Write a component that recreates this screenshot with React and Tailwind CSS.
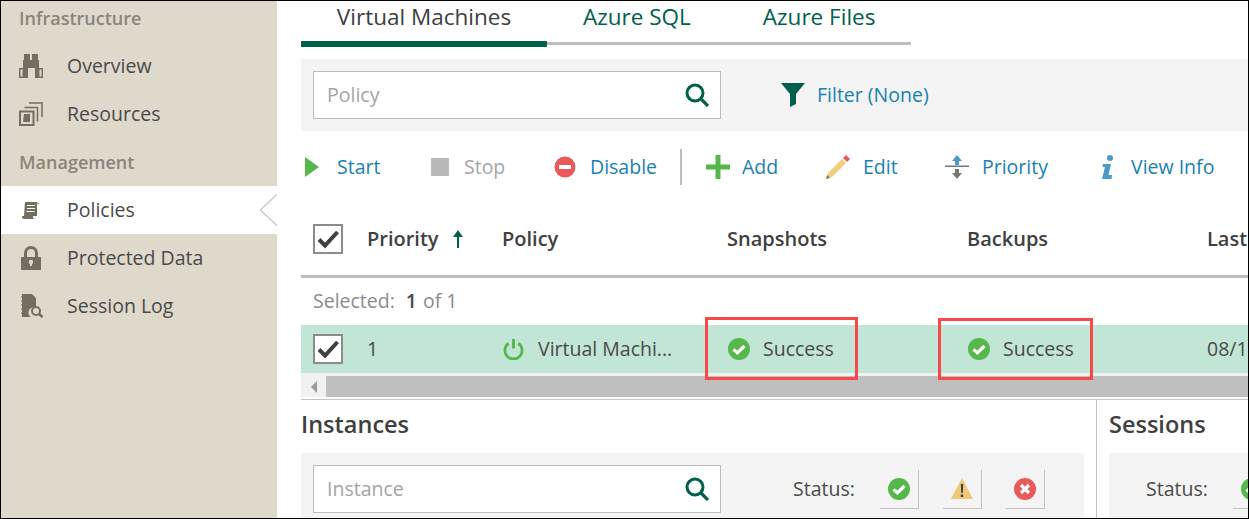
const font = { fontFamily: '"Open Sans", sans-serif' };

const CheckCircle = ({ className = "w-[22px] h-[22px]" }) => (
  <svg viewBox="0 0 22 22" className={className}>
    <circle cx="11" cy="11" r="11" fill="#56b84b" />
    <path d="M5.500 11.300l3.800 3.600L16.500 8" fill="none" stroke="#fff" strokeWidth="3.200" />
  </svg>
);

const SearchGlass = () => (
  <svg viewBox="0 0 24 24" className="w-6 h-6 shrink-0" fill="none" stroke="#00604b">
    <circle cx="10" cy="10" r="8" strokeWidth="3" />
    <path d="M15.500 15.500l7.500 7.500" strokeWidth="3.200" />
  </svg>
);

const Binoculars = () => (
  <svg viewBox="0 0 24 24" className="w-6 h-6" fill="#746e62">
    <path d="M5 0h6v6h2V0h6v6h1v8h4v10h-8V14H9v10H0V14h4V6h1z" />
    <path d="M1.500 15.500h2v7h-2zM20.500 15.500h2v7h-2z" fill="#dfd9cc" />
  </svg>
);

const Stack = () => (
  <svg viewBox="0 0 24 24" className="w-6 h-6" fill="none" stroke="#746e62" strokeWidth="1.500">
    <path d="M10 1h13v14M5.500 5.500h13v14" />
    <rect x="1" y="9.500" width="13.500" height="13.500" strokeWidth="2" />
    <path d="M5 12h6v8H4z" fill="#746e62" stroke="none" />
  </svg>
);

const Scroll = () => (
  <svg viewBox="0 0 18 17" className="ml-[3px] w-[18px] h-[17px]" fill="#746e62">
    <path d="M3 0h12v14H2z" />
    <path d="M15.500 0l2 2h-2z" />
    <path d="M0 14h11v1.500l1 1.500H2q-2 0-2-3z" />
    <path d="M5 3.500h8M5 6.500h8M4.500 9.500h8" stroke="#fff" strokeWidth="1" />
  </svg>
);

const Lock = () => (
  <svg viewBox="0 0 20 24" className="ml-0.5 w-5 h-6" fill="#746e62">
    <path d="M3 11V7a7 7 0 0 1 14 0v4h-3V7a4 4 0 0 0-8 0v4z" />
    <rect y="11" width="20" height="13" />
    <circle cx="10" cy="16" r="2.200" fill="#dfd9cc" />
    <rect x="9" y="16" width="2" height="4" fill="#dfd9cc" />
  </svg>
);

const SessionLog = () => (
  <svg viewBox="0 0 22 24" className="ml-0.5 w-[22px] h-6">
    <path d="M1 0h10l1 1 3 3v10a5 5 0 0 0-5 9H1z" fill="#746e62" />
    <path d="M1 3h-1M1 7h-1M1 11h-1M1 15h-1M1 19h-1" stroke="#746e62" strokeWidth="1" />
    <circle cx="15" cy="17" r="4" fill="none" stroke="#746e62" strokeWidth="2" />
    <path d="M18 20l3.500 3" stroke="#746e62" strokeWidth="2.500" />
  </svg>
);

const NavItem = ({ icon, label, active }) => (
  <div className={`relative flex items-center h-12 ${active ? "bg-white" : ""}`}>
    <div className="w-[66px] pl-[18px] flex justify-start shrink-0">{icon}</div>
    <span className="text-[19.5px] text-[#4a4a4a]">{label}</span>
    {active && (
      <svg viewBox="0 0 18 32" className="absolute right-0 top-2 w-[18px] h-8">
        <path d="M18 0L1 16l17 16" fill="#dfd9cc" stroke="#c4c0b6" strokeWidth="1" />
        <path d="M18 1.500L2.500 16 18 30.500z" fill="#fff" />
      </svg>
    )}
  </div>
);

const SearchBox = ({ placeholder }) => (
  <div className="w-[408px] h-12 bg-white border border-[#bdbdbd] flex items-center justify-between pl-[13px] pr-[11px] shrink-0">
    <span className="text-[19.5px] text-[#a5a5a5]">{placeholder}</span>
    <SearchGlass />
  </div>
);

const Action = ({ icon, label, width, disabled }) => (
  <div className={`flex items-center shrink-0 ${width}`}>
    {icon}
    <span className={`text-[19.5px] ${disabled ? "text-[#a5a5a5]" : "text-[#1a7fb5]"}`}>{label}</span>
  </div>
);

const Checkbox = () => (
  <div className="w-[30px] h-[30px] bg-white border-2 border-[#8c8c8c] flex items-center justify-center shrink-0">
    <svg viewBox="0 0 24 24" className="w-6 h-6">
      <path d="M3 12.500l6 6L21.500 5" fill="none" stroke="#404040" strokeWidth="4" />
    </svg>
  </div>
);

const StatusButton = ({ children }) => (
  <div className="w-[39px] h-[39px] border-r border-b border-[#c4c4c4] flex items-center justify-center shrink-0">
    {children}
  </div>
);

const Success = ({ width }) => (
  <div className={`flex items-center shrink-0 ${width}`}>
    <CheckCircle className="w-[22px] h-[22px] ml-px mr-[13px]" />
    <span className="text-[19.5px] text-[#4a4a4a]">Success</span>
  </div>
);

export default function App() {
  return (
    <div className="w-[1249px] h-[519px] bg-white border border-black flex overflow-hidden" style={font}>
      <aside className="w-[276px] shrink-0 bg-[#dfd9cc] flex flex-col">
        <div className="h-[35px] pl-[18px] flex items-center text-[18px] font-semibold text-[#8a857a]">Infrastructure</div>
        <div className="mt-[6px]" />
        <NavItem icon={<Binoculars />} label="Overview" />
        <NavItem icon={<Stack />} label="Resources" />
        <div className="h-12 pl-[18px] flex items-center text-[18px] font-semibold text-[#8a857a]">Management</div>
        <NavItem icon={<Scroll />} label="Policies" active />
        <NavItem icon={<Lock />} label="Protected Data" />
        <NavItem icon={<SessionLog />} label="Session Log" />
      </aside>

      <main className="flex-1 min-w-0 pl-6 flex flex-col overflow-hidden">
        <div className="flex h-[46px] shrink-0 text-[22.5px] w-[610px]">
          <div className="w-[246px] h-[46px] border-b-[6px] border-[#00604b] text-[#404040] text-center leading-[32px]">Virtual Machines</div>
          <div className="flex-1 h-[44px] border-b-[3px] border-[#bdbdbd] flex text-[#00604b] leading-[32px]">
            <span className="ml-[36px]">Azure SQL</span>
            <span className="ml-[72px]">Azure Files</span>
          </div>
        </div>

        <div className="mt-3 h-[72px] shrink-0 bg-[#f4f4f4] flex items-center pl-3">
          <SearchBox placeholder="Policy" />
          <svg viewBox="0 0 24 24" className="ml-[60px] w-6 h-6 shrink-0" fill="#00604b">
            <path d="M0 0h24L15 11v10l-6 3V11z" />
          </svg>
          <span className="ml-3 text-[19.5px] text-[#1a7fb5]">Filter (None)</span>
        </div>

        <div className="h-[48px] mt-3 shrink-0 flex items-center">
          <Action
            width="w-[130px]"
            label="Start"
            icon={<svg viewBox="0 0 14 22" className="ml-1 mr-[18px] w-[14px] h-[22px]"><path d="M0 1l14 10L0 21z" fill="#56b84b" /></svg>}
          />
          <Action
            width="w-[123px]"
            label="Stop"
            disabled
            icon={<div className="mr-[15px] w-[18px] h-[18px] bg-[#b9b9b9]" />}
          />
          <Action
            width="w-[126px]"
            label="Disable"
            icon={
              <svg viewBox="0 0 22 22" className="mr-[14px] w-[22px] h-[22px]">
                <circle cx="11" cy="11" r="10.500" fill="#e95b5b" />
                <rect x="5" y="9" width="12" height="4" fill="#fff" />
              </svg>
            }
          />
          <div className="w-0.5 h-9 bg-[#bdbdbd] mr-6 shrink-0" />
          <Action
            width="w-[120px]"
            label="Add"
            icon={<svg viewBox="0 0 24 24" className="mr-3 w-6 h-6"><path d="M9.500 0h5v9.500H24v5h-9.500V24h-5v-9.500H0v-5h9.500z" fill="#56b84b" /></svg>}
          />
          <Action
            width="w-[119px]"
            label="Edit"
            icon={
              <svg viewBox="0 0 24 24" className="mr-[13px] w-6 h-6">
                <path d="M0 24l2-6L16 4l4 4L6 22z" fill="#f0cf7f" />
                <path d="M17 3l3-3 4 4-3 3z" fill="#e95b5b" />
                <path d="M0 24l1.300-4 2.700 2.700z" fill="#777" />
              </svg>
            }
          />
          <Action
            width="w-[156px]"
            label="Priority"
            icon={
              <svg viewBox="0 0 24 24" className="mr-[13px] w-6 h-6">
                <path d="M12 0l5 6h-3v4h-4V6H7z" fill="#4b98c9" />
                <rect y="10.500" width="24" height="1.500" fill="#777" />
                <path d="M12 24l-5-6h3v-4h4v4h3z" fill="#777" />
              </svg>
            }
          />
          <Action
            width="w-[120px]"
            label="View Info"
            icon={
              <svg viewBox="0 0 14 24" className="mr-4 w-[14px] h-6" fill="#4b98c9">
                <circle cx="9" cy="3" r="3" />
                <path d="M2 9h8l-2.500 11H11l-.5 4H1l3-12H1.500z" />
              </svg>
            }
          />
        </div>

        <div className="h-[87px] shrink-0 pl-3 pt-3 flex items-center border-b-[3px] border-[#bdbdbd] text-[20px] font-semibold text-[#404040] whitespace-nowrap">
          <div className="w-[54px] shrink-0"><Checkbox /></div>
          <div className="w-[135px] shrink-0 flex items-center">
            Priority
            <svg viewBox="0 0 12 18" className="ml-[13px] w-3 h-[18px]">
              <path d="M6 0l5 7H7v11H5V7H1z" fill="#00604b" />
            </svg>
          </div>
          <div className="w-[225px] shrink-0">Policy</div>
          <div className="w-[240px] shrink-0">Snapshots</div>
          <div className="w-[240px] shrink-0">Backups</div>
          <div className="shrink-0">Last</div>
        </div>

        <div className="h-[47px] shrink-0 pl-3 pb-0.5 flex items-center text-[19.5px] text-[#8c8c8c]">
          Selected:<span className="ml-[11px] font-semibold text-[#4a4a4a]">1</span><span className="ml-[6px]">of 1</span>
        </div>

        <div className="h-12 shrink-0 bg-[#c1e6d6] pl-3 flex items-center text-[19.5px] text-[#4a4a4a] whitespace-nowrap">
          <div className="w-[54px] shrink-0"><Checkbox /></div>
          <div className="w-[135px] shrink-0">1</div>
          <div className="w-[225px] shrink-0 flex items-center">
            <svg viewBox="0 0 22 22" className="ml-px mr-[14px] w-[21px] h-[21px]" fill="none" stroke="#56b84b" strokeWidth="3">
              <path d="M6 4.500a9 9 0 1 0 10 0M11 0v10" />
            </svg>
            Virtual Machi...
          </div>
          <Success width="w-[240px]" />
          <Success width="w-[240px]" />
          <div className="shrink-0">08/1</div>
        </div>

        <div className="h-6 pt-[3px] shrink-0 flex bg-[#f1f1f1]">
          <div className="w-[25px] shrink-0 flex items-center justify-center">
            <div className="border-y-[6px] border-y-transparent border-r-[6px] border-r-[#9a9a9a]" />
          </div>
          <div className="flex-1 bg-[#bfbfbf]" />
        </div>

        <div className="flex flex-1 mt-0.5 border-t border-[#c4c4c4] min-h-0">
          <section className="w-[783px] shrink-0">
            <h2 className="h-[53px] pb-1 flex items-center text-[23.5px] font-semibold text-[#404040]">Instances</h2>
            <div className="h-[70px] bg-[#f4f4f4] pl-3 pt-3 flex items-start">
              <SearchBox placeholder="Instance" />
              <span className="ml-[72px] mt-[9px] text-[19.5px] text-[#4a4a4a]">Status:</span>
              <div className="ml-[25px] mt-[5px] flex gap-6">
                <StatusButton><CheckCircle /></StatusButton>
                <StatusButton>
                  <svg viewBox="0 0 22 22" className="w-[22px] h-[22px]">
                    <path d="M11 0l11 21H0z" fill="#f1c877" />
                    <path d="M9.800 6h2.400l-.4 9h-1.600zM9.800 16.500h2.400v2.500H9.800z" fill="#404040" />
                  </svg>
                </StatusButton>
                <StatusButton>
                  <svg viewBox="0 0 22 22" className="w-[22px] h-[22px]">
                    <circle cx="11" cy="11" r="11" fill="#e95b5b" />
                    <path d="M7 7l8 8M15 7l-8 8" stroke="#fff" strokeWidth="3.200" />
                  </svg>
                </StatusButton>
              </div>
            </div>
          </section>
          <section className="ml-3 flex-1 border-l border-[#c4c4c4] pl-3 min-w-0">
            <h2 className="h-[53px] pb-1 flex items-center text-[23.5px] font-semibold text-[#404040]">Sessions</h2>
            <div className="h-[70px] bg-[#f4f4f4] pt-[17px] flex items-start overflow-hidden">
              <span className="ml-[37px] mt-1 text-[19.5px] text-[#4a4a4a]">Status:</span>
              <div className="ml-[25px] shrink-0"><StatusButton><CheckCircle /></StatusButton></div>
            </div>
          </section>
        </div>
      </main>

      {/* red annotation boxes over the screenshot */}
      <div className="absolute left-[705px] top-[317px] w-[153px] h-[63px] border-[3px] border-[#f84949]" />
      <div className="absolute left-[938px] top-[318px] w-[155px] h-[62px] border-[3px] border-[#f84949]" />
    </div>
  );
}
